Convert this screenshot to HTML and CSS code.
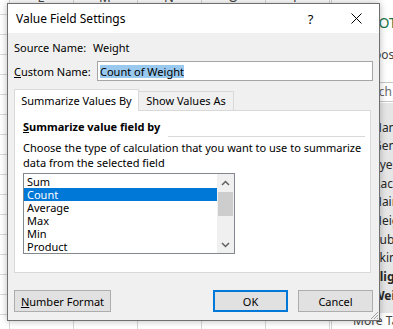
FILE: index.html
```html
<!DOCTYPE html>
<html lang="en">
<head>
	<meta charset="UTF-8">
	<title>Value Field Settings</title>
	<link rel="stylesheet" href="styles.css">
</head>
<body>
	<div class="screen">
		<div class="sheet">
			<div class="colheads">
				<span>L</span><span>M</span><span>N</span><span>O</span><span>P</span>
			</div>
		</div>
		<aside class="pane">
			<div class="pane-title">PIVOTTABLE FIELDS</div>
			<div class="pane-hint">Choose fields to add to report:</div>
			<div class="pane-search">Search</div>
			<ul class="pane-list">
				<li>Handedness</li>
				<li>Gender</li>
				<li>Eyes</li>
				<li>Race</li>
				<li>Hair</li>
				<li>Height</li>
				<li>Subject</li>
				<li>Skin</li>
				<li class="on">Eligible</li>
				<li class="on">Weight</li>
			</ul>
			<div class="pane-more">More Tables...</div>
		</aside>

		<div class="dialog">
			<div class="titlebar">
				<span class="title">Value Field Settings</span>
				<span class="tb-btn">?</span>
				<span class="tb-btn">
					<svg width="11" height="11" viewBox="0 0 11 11"><path d="M0.5 0.5L10.5 10.5M10.5 0.5L0.5 10.5" stroke="#000" stroke-width="1" fill="none"/></svg>
				</span>
			</div>
			<div class="body">
				<div class="fields">
					<span>Source Name:</span>
					<span>Weight</span>
					<span><u>C</u>ustom Name:</span>
					<div class="input"><span class="sel">Count of Weight</span></div>
				</div>
				<div class="tabs">
					<div class="tab active">Summarize Values By</div>
					<div class="tab">Show Values As</div>
				</div>
				<div class="panel">
					<div class="heading">
						<span><u>S</u>ummarize value field by</span>
						<span class="rule"></span>
					</div>
					<p class="hint">Choose the type of calculation that you want to use to summarize<br>data from the selected field</p>
					<div class="listbox">
						<ul class="items">
							<li>Sum</li>
							<li class="selected">Count</li>
							<li>Average</li>
							<li>Max</li>
							<li>Min</li>
							<li>Product</li>
						</ul>
						<div class="scrollbar">
							<div class="arrow">
								<svg width="9" height="6" viewBox="0 0 9 6"><path d="M1 5L4.5 1.5L8 5" stroke="#606060" stroke-width="1.5" fill="none"/></svg>
							</div>
							<div class="thumb"></div>
							<div class="track"></div>
							<div class="arrow">
								<svg width="9" height="6" viewBox="0 0 9 6"><path d="M1 1L4.5 4.5L8 1" stroke="#606060" stroke-width="1.5" fill="none"/></svg>
							</div>
						</div>
					</div>
				</div>
				<div class="buttons">
					<button class="btn wide"><u>N</u>umber Format</button>
					<span class="spacer"></span>
					<button class="btn default">OK</button>
					<button class="btn">Cancel</button>
				</div>
			</div>
			<svg class="grip" width="9" height="9" viewBox="0 0 9 9">
				<path d="M8 1L1 8M8 4L4 8M8 7L7 8" stroke="#a0a0a0" stroke-width="1" fill="none"/>
			</svg>
		</div>
	</div>
</body>
</html>
```

FILE: styles.css
```css
* {
	box-sizing: border-box;
}
html, body, ul, li, p {
	margin: 0;
	padding: 0;
}
ul {
	list-style: none;
}
body {
	background: #fff;
	color: #000;
	font-family: "Noto Sans", "DejaVu Sans", sans-serif;
	font-size: 11px;
}

.screen {
	position: relative;
	display: flex;
	width: 393px;
	height: 329px;
	overflow: hidden;
}

/* worksheet behind the dialog */
.sheet {
	flex: none;
	width: 331px;
	background-color: #fff;
	background-image:
		linear-gradient(to right, #d9d9d9 1px, transparent 1px),
		linear-gradient(to bottom, #d9d9d9 1px, transparent 1px);
	background-size: 64px 20px;
	background-position: 9px 0, 0 14px;
}
.colheads {
	display: flex;
	margin: -9px 0 0 9px;
	height: 13px;
}
.colheads span {
	width: 64px;
	flex: none;
	text-align: center;
	font-size: 13px;
	line-height: 13px;
	color: #444;
}

/* pivot field list pane */
.pane {
	flex: 1;
	display: flex;
	flex-direction: column;
	border-left: 1px solid #d4d4d4;
	background: #fff;
	white-space: nowrap;
	overflow: hidden;
}
.pane-title {
	height: 40px;
	padding: 14px 0 0 25px;
	line-height: 18px;
	font-size: 14px;
	color: #217346;
}
.pane-hint {
	margin-top: 7px;
	padding-left: 27px;
	line-height: 16px;
	font-size: 12px;
	color: #444;
}
.pane-search {
	margin: 19px 0 0 8px;
	height: 20px;
	padding-left: 13px;
	border: 1px solid #c6c6c6;
	border-right: none;
	line-height: 18px;
	font-size: 12px;
	color: #666;
}
.pane-list {
	height: 214px;
	margin-top: 1px;
	padding-top: 16px;
	background: #e6e6e6;
}
.pane-list li {
	height: 18.7px;
	line-height: 18.7px;
	padding-left: 41px;
	font-size: 12px;
	color: #262626;
}
.pane-list li.on {
	font-weight: bold;
}
.pane-more {
	padding-left: 21px;
	line-height: 16px;
	font-size: 12px;
	color: #444;
}

/* dialog */
.dialog {
	position: absolute;
	left: 7px;
	top: 3px;
	width: 373px;
	height: 318px;
	background: #f0f0f0;
	border: 1px solid #6f6f6f;
	box-shadow: 0 0 7px rgba(0, 0, 0, 0.28);
}
.titlebar {
	display: flex;
	align-items: center;
	height: 29px;
	background: #fff;
}
.title {
	flex: 1;
	padding-left: 8px;
	font-size: 12px;
}
.tb-btn {
	display: flex;
	align-items: center;
	justify-content: center;
	width: 45px;
	height: 29px;
	font-size: 13px;
}
.tb-btn:last-child {
	width: 46px;
}
.body {
	padding: 6px 6px 8px 6px;
}
.fields {
	display: grid;
	grid-template-columns: 79px 1fr;
	grid-template-rows: 16px 20px;
	row-gap: 6px;
	align-items: center;
}
.input {
	height: 20px;
	margin-left: 4px;
	padding-left: 2px;
	background: #fff;
	border: 1px solid #a5a5a5;
	display: flex;
	align-items: center;
}
.sel {
	line-height: 13px;
	background: #99c9ef;
}

.tabs {
	position: relative;
	z-index: 1;
	display: flex;
	align-items: flex-end;
	height: 21px;
	margin-top: 8px;
}
.tab {
	height: 19px;
	line-height: 18px;
	text-align: center;
	width: 95px;
	background: #f0f0f0;
	border: 1px solid #d9d9d9;
	border-bottom: none;
	border-left: none;
}
.tab.active {
	width: 125px;
	height: 22px;
	margin-bottom: -1px;
	line-height: 22px;
	background: #fff;
	border-left: 1px solid #d9d9d9;
}
.panel {
	width: 357px;
	height: 163px;
	padding: 8px 5px 0 8px;
	background: #fff;
	border: 1px solid #d9d9d9;
}
.heading {
	display: flex;
	height: 18px;
	line-height: 16px;
	font-weight: bold;
}
.rule {
	flex: 1;
	align-self: flex-end;
	height: 1px;
	margin-left: 8px;
	background: #d9d9d9;
}
.hint {
	margin-top: 3px;
	line-height: 15px;
}
.listbox {
	display: flex;
	width: 212px;
	height: 81px;
	margin-top: 3px;
	border: 1px solid #828790;
	background: #fff;
}
.items {
	flex: 1;
	padding-top: 1px;
}
.items li {
	height: 13px;
	line-height: 13px;
	padding-left: 3px;
}
.items li.selected {
	background: #0078d7;
	color: #fff;
}
.scrollbar {
	display: flex;
	flex-direction: column;
	width: 17px;
	background: #f0f0f0;
}
.arrow {
	display: flex;
	align-items: center;
	justify-content: center;
	height: 17px;
}
.thumb {
	height: 24px;
	margin: 1px 1px 0 1px;
	background: #cdcdcd;
}
.track {
	flex: 1;
}

.buttons {
	display: flex;
	gap: 10px;
	margin-top: 17px;
}
.spacer {
	flex: 1;
}
.btn {
	width: 75px;
	height: 22px;
	padding: 0;
	font-family: inherit;
	font-size: 11px;
	color: #000;
	background: #e1e1e1;
	border: 1px solid #adadad;
}
.btn.wide {
	width: 97px;
}
.btn.default {
	border: 2px solid #0078d7;
}
.grip {
	position: absolute;
	right: 0;
	bottom: 0;
}
```
